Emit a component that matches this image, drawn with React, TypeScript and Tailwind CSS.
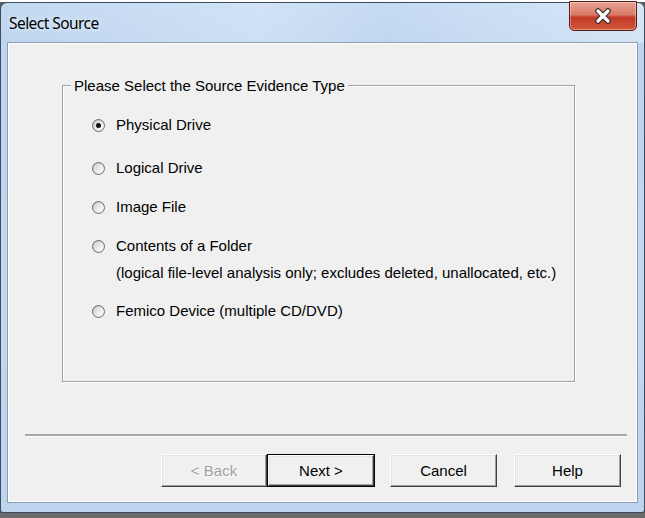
import React from "react";

const sans = { fontFamily: '"Liberation Sans", Arial, sans-serif' };

function Radio({ checked }: { checked?: boolean }) {
  return (
    <span className="relative flex h-[13px] w-[13px] shrink-0 items-center justify-center rounded-full border border-[#6f6f6f] bg-[linear-gradient(135deg,#b8b8b8_0%,#dcdcdc_50%,#fbfbfb_100%)]">
      <span className="flex h-[9px] w-[9px] items-center justify-center rounded-full bg-[linear-gradient(135deg,#d4d4d4,#ffffff)]">
        {checked && <span className="h-[5px] w-[5px] rounded-full bg-[#111111]" />}
      </span>
    </span>
  );
}

function Option({ label, checked, className = "" }: { label: string; checked?: boolean; className?: string }) {
  return (
    <div className={"flex h-[20px] items-center " + className}>
      <Radio checked={checked} />
      <span className="ml-[11px] text-[15px] leading-[20px] text-black">{label}</span>
    </div>
  );
}

function Btn({
  label,
  width,
  disabled,
  isDefault,
}: {
  label: string;
  width: string;
  disabled?: boolean;
  isDefault?: boolean;
}) {
  const inner = (
    <div className="flex h-full w-full items-center justify-center border-b border-r border-t border-l border-b-[#404040] border-l-white border-r-[#404040] border-t-white bg-[#f0f0f0] shadow-[inset_-1px_-1px_0_#a0a0a0,inset_1px_1px_0_#e3e3e3]">
      <span
        className={
          "text-[15px] leading-none " +
          (disabled ? "text-[#a0a0a0] [text-shadow:1px_1px_0_#ffffff]" : "text-black")
        }
      >
        {label}
      </span>
    </div>
  );
  return (
    <div className={width + " h-[33px] " + (isDefault ? "border border-black" : "")}>{inner}</div>
  );
}

export default function App() {
  return (
    <div className="flex h-[518px] w-[645px] flex-col overflow-hidden bg-[#5c5c5c]" style={sans}>
      <div className="h-[2px] shrink-0 bg-[#ffffff]" />
      <div className="relative flex h-[511px] shrink-0 flex-col rounded-t-[7px] rounded-b-[3px] border border-[#3d4b5c] bg-[linear-gradient(180deg,#c2d9f2_0%,#bdd5ef_8%,#c1d8f1_60%,#bcd4ee_100%)] px-[6px] pb-[9px]">
        <div className="pointer-events-none absolute inset-x-0 top-0 h-[40px] rounded-t-[6px] bg-[linear-gradient(90deg,rgba(255,255,255,0)_0%,rgba(255,255,255,0.25)_40%,rgba(255,255,255,0.05)_60%,rgba(255,255,255,0.35)_100%)]" />
        <div className="relative flex h-[39px] shrink-0 items-center pl-[2px] pt-[2px]">
          <span
            className="text-[15.5px] tracking-[-0.55px] text-black [text-shadow:0_0_6px_rgba(255,255,255,0.9)]"
            style={{ fontFamily: '"Noto Sans", "Open Sans", sans-serif' }}
          >
            Select Source
          </span>
        </div>
        <div className="absolute right-[7px] top-[-2px] flex h-[30px] w-[68px] items-center justify-center rounded-b-[5px] border border-[#5a1c14] bg-[linear-gradient(180deg,#e9a395_0%,#d97a66_45%,#c23a26_55%,#d0583c_100%)] shadow-[inset_0_0_0_1px_rgba(255,255,255,0.35)]">
          <svg width="20" height="16" viewBox="0 0 20 16">
            <path d="M5 3 L15 13 M15 3 L5 13" stroke="#3a2a2a" strokeWidth="5.5" strokeLinecap="round" />
            <path d="M5 3 L15 13 M15 3 L5 13" stroke="#ffffff" strokeWidth="3.2" strokeLinecap="round" />
          </svg>
        </div>
        <div className="relative flex flex-1 flex-col border border-[#8d9db0] bg-[#f0f0f0] shadow-[inset_1px_1px_0_#ffffff,inset_-1px_-1px_0_#ffffff]">
          <div className="relative ml-[54px] mr-[62px] mt-[42px] h-[297px] shrink-0 border border-[#a0a0a0] shadow-[inset_1px_1px_0_#ffffff,1px_1px_0_#ffffff]">
            <span className="absolute left-[8px] top-[-9px] bg-[#f0f0f0] px-[3px] text-[15px] leading-[18px] text-black">
              Please Select the Source Evidence Type
            </span>
            <div className="flex flex-col pl-[29px] pt-[29px]">
              <Option label="Physical Drive" checked />
              <Option label="Logical Drive" className="mt-[23px]" />
              <Option label="Image File" className="mt-[19px]" />
              <Option label="Contents of a Folder" className="mt-[19px]" />
              <div className="ml-[24px] mt-[7px] h-[20px] text-[15px] leading-[20px] text-black">
                (logical file-level analysis only; excludes deleted, unallocated, etc.)
              </div>
              <Option label="Femico Device (multiple CD/DVD)" className="mt-[18px]" />
            </div>
          </div>
          <div className="ml-[17px] mr-[10px] mt-[52px] h-[3px] shrink-0 border-t-2 border-[#a8a8a8] bg-white" />
          <div className="mt-[17px] flex justify-end pr-[16px]">
            <Btn label="< Back" width="w-[106px]" disabled />
            <Btn label="Next >" width="w-[108px]" isDefault />
            <div className="w-[15px]" />
            <Btn label="Cancel" width="w-[107px]" />
            <div className="w-[17px]" />
            <Btn label="Help" width="w-[107px]" />
          </div>
        </div>
      </div>
      <div className="flex-1 bg-[#6a6a6a]" />
    </div>
  );
}
